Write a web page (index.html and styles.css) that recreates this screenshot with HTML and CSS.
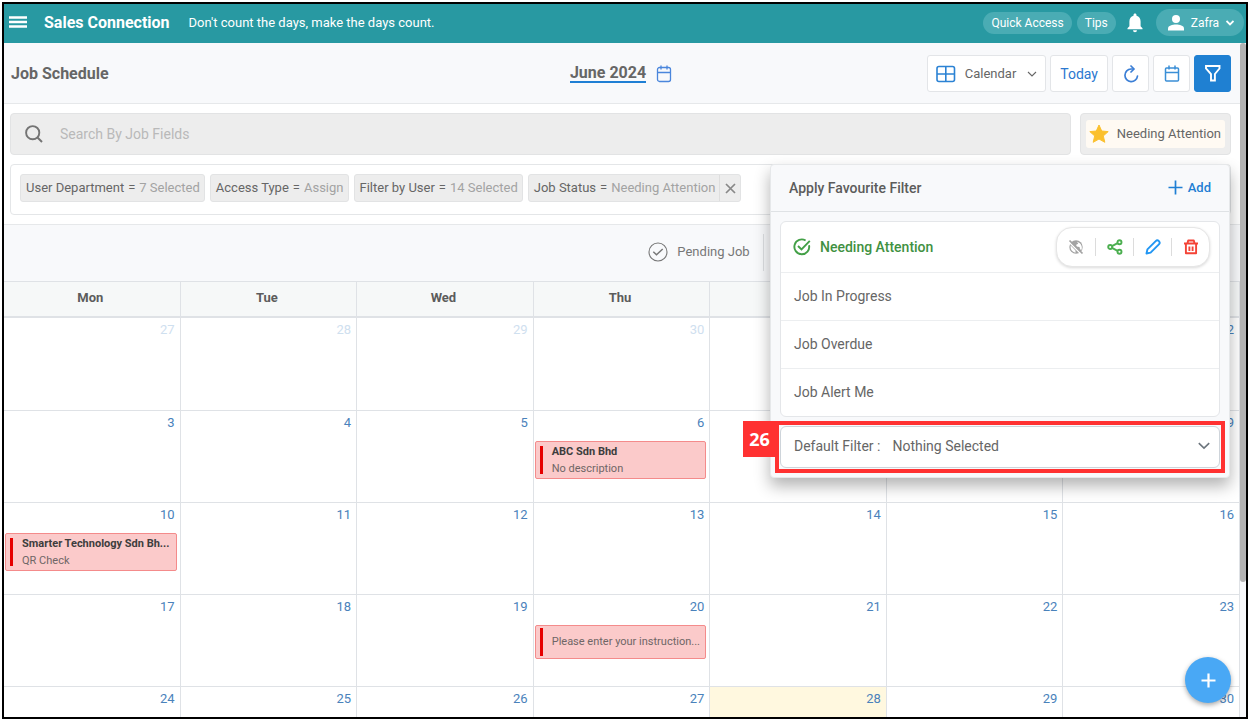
FILE: index.html
```html
<!DOCTYPE html>
<html lang="en">
<head>
<meta charset="utf-8">
<title>Job Schedule</title>
<link rel="stylesheet" href="styles.css">
</head>
<body>
<div class="frame">
  <header class="topbar">
    <button class="menu-btn" aria-label="Menu"><svg width="18" height="14" viewBox="0 0 18 14"><path d="M0 1.500h18M0 6h18M0 10.500h18" stroke="#fff" stroke-width="2.400"/></svg></button>
    <strong class="brand">Sales Connection</strong>
    <span class="quote">Don't count the days, make the days count.</span>
    <nav class="top-actions">
      <button class="pill">Quick Access</button>
      <button class="pill">Tips</button>
      <button class="bell" aria-label="Notifications"><svg width="16" height="20" viewBox="0 0 16 20"><path d="M8 0.500c-.9 0-1.500.6-1.500 1.500v.7C3.900 3.400 2.400 5.700 2.400 8.500v4.800L.5 15.300v1h15v-1l-1.900-2V8.500c0-2.800-1.500-5.100-4.100-5.800V2c0-.9-.6-1.500-1.500-1.500zM6 17.300a2 2 0 0 0 4 0z" fill="#fff"/></svg></button>
      <button class="pill user">
        <svg width="16" height="16" viewBox="0 0 16 16"><circle cx="8" cy="4" r="4" fill="#fff"/><path d="M0 15.500v-2C0 10.500 4.500 9.500 8 9.500s8 1 8 4v2z" fill="#fff"/></svg>
        <span>Zafra</span>
        <svg width="8" height="6" viewBox="0 0 8 6"><path d="M.5 1L4 4.500 7.500 1" fill="none" stroke="#fff" stroke-width="1.800"/></svg>
      </button>
    </nav>
  </header>

  <div class="body">
    <main class="content">
      <section class="titlebar">
        <h1>Job Schedule</h1>
        <div class="month">
          <button class="month-name">June 2024</button>
          <svg width="16" height="18" viewBox="0 0 16 18" fill="none" stroke="#4a86dc" stroke-width="1.300"><rect x="1.500" y="2.500" width="13" height="14" rx="2"/><path d="M1.500 7.500h13M5 .5v4M11 .5v4"/></svg>
        </div>
        <div class="tools">
          <button class="tool view">
            <svg width="20" height="18" viewBox="0 0 20 18" fill="none" stroke="#2b82d4" stroke-width="1.600"><rect x="1" y="1.500" width="17.500" height="15" rx="2"/><path d="M9.800 1.500v15M1 9h17.500"/></svg>
            <span>Calendar</span>
            <svg width="10" height="6" viewBox="0 0 10 6"><path d="M1 1l4 4 4-4" fill="none" stroke="#666" stroke-width="1.100"/></svg>
          </button>
          <button class="tool today">Today</button>
          <button class="tool square" aria-label="Refresh"><svg width="16" height="18" viewBox="0 0 16 18" fill="none" stroke="#3b7fd6" stroke-width="1.700" stroke-linecap="round" stroke-linejoin="round"><path d="M10.500 4H8a6.300 6.300 0 1 0 6.500 7"/><path d="M8 1l3 3-3 3"/></svg></button>
          <button class="tool square" aria-label="Date"><svg width="16" height="18" viewBox="0 0 16 18" fill="none" stroke="#3b8fd6" stroke-width="1.500"><rect x="1.500" y="3" width="13" height="13" rx="1"/><path d="M1.500 7.500h13M5 .5v4M11 .5v4"/></svg></button>
          <button class="tool square active" aria-label="Filter"><svg width="18" height="19" viewBox="0 0 18 19" fill="none" stroke="#fff" stroke-width="1.900" stroke-linejoin="miter"><path d="M2 2h13.500v2.500l-4.600 5.500v6.500H7V10L2 4.500z"/></svg></button>
        </div>
      </section>

      <section class="filters">
        <div class="search-row">
          <label class="search">
            <svg width="18" height="18" viewBox="0 0 18 18" fill="none" stroke="#747474" stroke-width="1.900"><circle cx="7.700" cy="7.700" r="6.600"/><path d="M12.500 12.500l4.500 4.500"/></svg>
            <input type="text" placeholder="Search By Job Fields" aria-label="Search By Job Fields">
          </label>
          <div class="fav-box"><button class="fav">
            <svg width="20" height="20" viewBox="0 0 20 20"><path d="M10 1l2.700 6 6.500.6-4.900 4.300 1.500 6.400L10 15l-5.800 3.300 1.500-6.400L.8 7.600 7.300 7z" fill="#fbc02d" stroke="#fbc02d" stroke-linejoin="round"/></svg>
            <span>Needing Attention</span></button></div>
        </div>
        <div class="chip-row">
          <span class="chip"><span>User Department</span><span>=</span><em>7 Selected</em></span>
          <span class="chip"><span>Access Type</span><span>=</span><em>Assign</em></span>
          <span class="chip"><span>Filter by User</span><span>=</span><em>14 Selected</em></span>
          <span class="chip"><span>Job Status</span><span>=</span><em>Needing Attention</em><button class="chip-x" aria-label="Remove"><svg width="11" height="11" viewBox="0 0 11 11"><path d="M1 1l9 9M10 1l-9 9" stroke="#888" stroke-width="1.700"/></svg></button></span>

          <aside class="panel">
            <div class="panel-head">
              <h2>Apply Favourite Filter</h2>
              <button class="add"><svg width="15" height="15" viewBox="0 0 15 15"><path d="M7.500.5v14M.5 7.500h14" stroke="#1f7fd4" stroke-width="1.700"/></svg>Add</button>
            </div>
            <ul class="fav-list">
              <li class="selected">
                <svg width="18" height="18" viewBox="0 0 18 18" fill="none" stroke="#43a047" stroke-width="1.900"><path d="M16 7.200A7.400 7.400 0 1 1 12.600 2.500"/><path d="M5 8l3.500 3.500L16.800 2.800"/></svg>
                <span>Needing Attention</span>
                <div class="row-tools">
                  <button aria-label="Not public"><svg width="16" height="16" viewBox="0 0 16 16"><circle cx="8" cy="8" r="6.700" fill="#a3a3a3"/><path d="M9 2.800l1.200 2-2 1 .3 1.700 3 .6.6 2.500 1.500.2c.8-2.500.2-6.500-4.600-8zM2.700 6.500l4.800 5v2.200C4.200 13 2 10 2.700 6.500z" fill="#fff"/><path d="M.3 2.300l13 13" stroke="#fff" stroke-width="1.500"/><path d="M1.500 1.500l13 13" stroke="#a3a3a3" stroke-width="1.700"/></svg></button>
                  <button aria-label="Share"><svg width="16" height="16" viewBox="0 0 16 16" fill="none" stroke="#4caf50" stroke-width="1.900"><circle cx="3.200" cy="8" r="2"/><circle cx="12.500" cy="3.200" r="2"/><circle cx="12.500" cy="12.800" r="2"/><path d="M5 7.200l5.600-3M5 8.800l5.600 3"/></svg></button>
                  <button aria-label="Edit"><svg width="16" height="16" viewBox="0 0 16 16" fill="none" stroke="#2196f3" stroke-width="1.900" stroke-linejoin="round"><path d="M1.500 14.500l.9-4.100 8.300-8.300a2.100 2.100 0 0 1 3.200 3.200l-8.300 8.300z"/></svg></button>
                  <button aria-label="Delete"><svg width="16" height="16" viewBox="0 0 16 16" fill="none" stroke="#f44336" stroke-width="1.900" stroke-linejoin="round"><path d="M1 4.500h14M4.500 4l.7-2.500h5.600l.7 2.500M2.900 4.500v9.800h10.200V4.500M6.400 7.500v4.500M9.600 7.500v4.500"/></svg></button>
                </div>
              </li>
              <li>Job In Progress</li>
              <li>Job Overdue</li>
              <li>Job Alert Me</li>
            </ul>
            <div class="default-filter">
              <label for="default-filter">Default Filter :</label>
              <select id="default-filter"><option>Nothing Selected</option></select>
              <svg width="12" height="8" viewBox="0 0 12 8"><path d="M.8 1.200L6 6.200l5.200-5" fill="none" stroke="#6c757d" stroke-width="1.600"/></svg>
              <span class="callout"></span><b class="callout-no">26</b>
            </div>
          </aside>
        </div>
      </section>

      <section class="status">
        <button class="pending"><svg width="20" height="20" viewBox="0 0 20 20" fill="none" stroke="#777" stroke-width="1.100"><circle cx="10" cy="10" r="9"/><path d="M5.300 9.800l3.200 3L14.700 7" stroke-width="1.500"/></svg><span>Pending Job</span></button>
      </section>

      <table class="calendar">
        <thead><tr><th>Mon</th><th>Tue</th><th>Wed</th><th>Thu</th><th></th><th></th><th></th></tr></thead>
        <tbody>
          <tr><td class="other">27</td><td class="other">28</td><td class="other">29</td><td class="other">30</td><td></td><td></td><td>2</td></tr>
          <tr><td>3</td><td>4</td><td>5</td><td>6<div class="event"><strong>ABC Sdn Bhd</strong><span>No description</span></div></td><td></td><td></td><td>9</td></tr>
          <tr><td>10<div class="event"><strong>Smarter Technology Sdn Bh...</strong><span>QR Check</span></div></td><td>11</td><td>12</td><td>13</td><td>14</td><td>15</td><td>16</td></tr>
          <tr><td>17</td><td>18</td><td>19</td><td>20<div class="event single"><span>Please enter your instruction...</span></div></td><td>21</td><td>22</td><td>23</td></tr>
          <tr><td>24</td><td>25</td><td>26</td><td>27</td><td class="today-cell">28</td><td>29</td><td>30</td></tr>
        </tbody>
      </table>
    </main>
    <div class="scroll"><div class="thumb"></div></div>
  </div>
  <button class="fab" aria-label="Add job"><svg width="15" height="15" viewBox="0 0 15 15"><path d="M7.500.5v14M.5 7.500h14" stroke="#fff" stroke-width="2.200"/></svg></button>
</div>
</body>
</html>
```

FILE: styles.css
```css
* { box-sizing: border-box; }
html, body { height: 100%; }
body { margin: 0; padding: 2px 4px 4px 2px; background: #fff; font: 13px/20px Roboto, sans-serif; color: #666; }
button, input, select { font: inherit; color: inherit; border: 0; background: none; padding: 0; margin: 0; }
button { display: inline-flex; align-items: center; justify-content: center; cursor: pointer; }
svg { flex: none; }

.frame { position: relative; height: 100%; border: 2px solid #000; display: flex; flex-direction: column; overflow: hidden; }

.topbar { flex: none; height: 39px; background: #2899a2; color: #fff; display: flex; align-items: center; padding: 0 2px 2px 5px; }
.menu-btn { margin-right: 17px; }
.brand { font-size: 16px; font-weight: 700; margin-right: 19px; }
.quote { font-size: 13px; }
.top-actions { margin-left: auto; display: flex; align-items: center; gap: 5px; }
.pill { height: 22px; border-radius: 14px; padding: 0 8px; background: #4aacb4; font-size: 12px; }
.bell { margin: 0 8px 0 6px; }
.user { height: 27px; padding: 0 10px 0 12px; gap: 7px; }

.body { flex: 1; display: flex; min-height: 0; }
.content { flex: 1; min-width: 0; overflow: hidden; }
.scroll { flex: none; width: 6px; background: #f8f9fb; }
.thumb { height: 80%; background: #b3b3b3; border-radius: 3px; }

.titlebar { height: 61px; background: #f8f9fb; border-bottom: 1px solid #e6e8ea; display: grid; grid-template-columns: 1fr auto 1fr; align-items: center; padding: 1px 9px 0 7px; }
h1 { margin: 0; font-size: 16px; font-weight: 700; color: #666; }
.month { display: flex; align-items: center; gap: 10px; }
.month-name { font-size: 16px; font-weight: 700; color: #666; height: 18px; border-bottom: 2px solid #1f7fd4; }
.tools { display: flex; gap: 4px; justify-content: flex-end; }
.tool { height: 37px; min-width: 37px; border: 1px solid #e3e5e8; border-radius: 3px; background: #fff; color: #2b78d0; }
.view { color: #666; padding: 0 8px; gap: 9px; }
.view span { margin-right: 2px; }
.today { padding: 0 9px; font-size: 14px; }
.active { background: #1f80d2; border-color: #1f80d2; }

.filters { padding: 9px 9px 9px 6px; }
.search-row { display: flex; gap: 9px; margin-bottom: 9px; }
.search { flex: 1; height: 42px; display: flex; align-items: center; gap: 17px; padding: 0 14px; background: #ededed; border: 1px solid #e2e3e4; border-radius: 4px; }
.search input { flex: 1; outline: 0; font-size: 14px; }
.search input::placeholder { color: #b9b9b9; opacity: 1; }
.fav-box { height: 42px; padding: 6px 5px; background: #ededed; border: 1px solid #e2e3e4; border-radius: 4px; }
.fav { height: 28px; padding: 0 4px 0 3px; gap: 8px; background: #fffaf3; border-radius: 3px; }
.chip-row { position: relative; height: 51px; display: flex; align-items: flex-start; gap: 5px; padding: 9px; border: 1px solid #e4e6e8; border-radius: 4px; }
.chip { height: 28px; display: flex; align-items: center; gap: 4px; padding: 0 4px 0 5px; background: #ededed; border: 1px solid #e2e3e4; border-radius: 3px; white-space: nowrap; }
.chip em { font-style: normal; color: #a3a3a3; }
.chip-x { height: 26px; width: 21px; margin-right: -4px; border-left: 1px solid #dedede; }

.panel { position: absolute; z-index: 2; top: -1px; right: 0; width: 460px; background: #f8f9fb; border: 1px solid #e6e8ea; border-radius: 4px; box-shadow: 0 8px 16px rgba(0, 0, 0, .3); font-size: 14px; }
.panel-head { height: 47px; display: flex; align-items: center; justify-content: space-between; padding: 0 18px 1px; border-bottom: 1px solid #dfe2e5; }
h2 { margin: 0; font-size: 14px; font-weight: 500; color: #5c5c5c; }
.add { gap: 5px; font-size: 13px; font-weight: 500; color: #1f7fd4; }
.fav-list { list-style: none; margin: 9px; padding: 0; background: #fff; border: 1px solid #e4e6e9; border-radius: 6px; }
.fav-list li { height: 48px; padding: 0 13px 2px; display: flex; align-items: center; border-top: 1px solid #eceef0; }
.fav-list .selected { height: 50px; border-top: 0; padding: 0 9px 0 12px; gap: 9px; color: #3f9142; font-weight: 500; }
.row-tools { margin-left: auto; height: 40px; display: flex; align-items: center; border: 1px solid #e6e6e6; border-radius: 16px; background: #fff; box-shadow: 0 1px 3px rgba(0, 0, 0, .15); }
.row-tools button { width: 38px; height: 18px; }
.row-tools button + button { border-left: 1px solid #dcdcdc; }
.default-filter { position: relative; height: 42px; margin: 9px; display: flex; align-items: center; padding: 0 9px 2px 13px; gap: 12px; background: #fff; border: 1px solid #ced4da; border-radius: 6px; }
.default-filter select { flex: 1; appearance: none; }
.callout { position: absolute; inset: -6px; border: 4px solid #ff3131; pointer-events: none; }
.callout-no { position: absolute; top: -6px; left: -38px; width: 33px; height: 36px; text-align: center; background: #ff3131; color: #fff; font: 700 18px/36px "Open Sans", sans-serif; }

.status { height: 57px; background: #f8f9fb; border-top: 1px solid #e6e8ea; display: flex; justify-content: center; align-items: center; padding: 0 0 2px 168px; }
.pending { height: 37px; gap: 9px; padding-right: 13px; border-right: 1px solid #dcdfe2; color: #777; }

.calendar { width: 100%; table-layout: fixed; border-collapse: separate; border-spacing: 0; border-top: 1px solid #dfe2e6; }
.calendar th { height: 36px; padding: 0 3px 2px 0; background: #f6f8f8; border-right: 1px solid #dfe2e6; border-bottom: 2px solid #dfe2e6; font-weight: 700; color: #5c5c5c; }
.calendar td { height: 92px; padding: 2px 5px 0 1px; vertical-align: top; text-align: right; border-right: 1px solid #dfe2e6; border-bottom: 1px solid #dfe2e6; color: #4a82bb; }
.calendar tbody tr:first-child td { height: 93px; }
.calendar .other { color: #cfe0ef; }
.calendar .today-cell { background: #fff8df; }
.event { position: relative; margin: 8px -2px 0 0; height: 38px; padding: 1px 0 0 16px; text-align: left; font-size: 11px; line-height: 17px; background: #fbcaca; border: 1px solid #f48b8b; border-radius: 2px; }
.event::before { content: ""; position: absolute; left: 4px; top: 4px; width: 3px; height: 28px; background: #e60000; }
.event strong, .event span { display: block; white-space: nowrap; }
.event strong { font-weight: 700; color: #3d3d3d; }
.event span { color: #6f6666; }
.single { height: 34px; padding-top: 7px; }
.single::before { top: 2px; }

.fab { position: absolute; right: 15px; bottom: 14px; width: 46px; height: 46px; border-radius: 50%; background: #49a8f5; box-shadow: 0 2px 5px rgba(0, 0, 0, .35); }
```
